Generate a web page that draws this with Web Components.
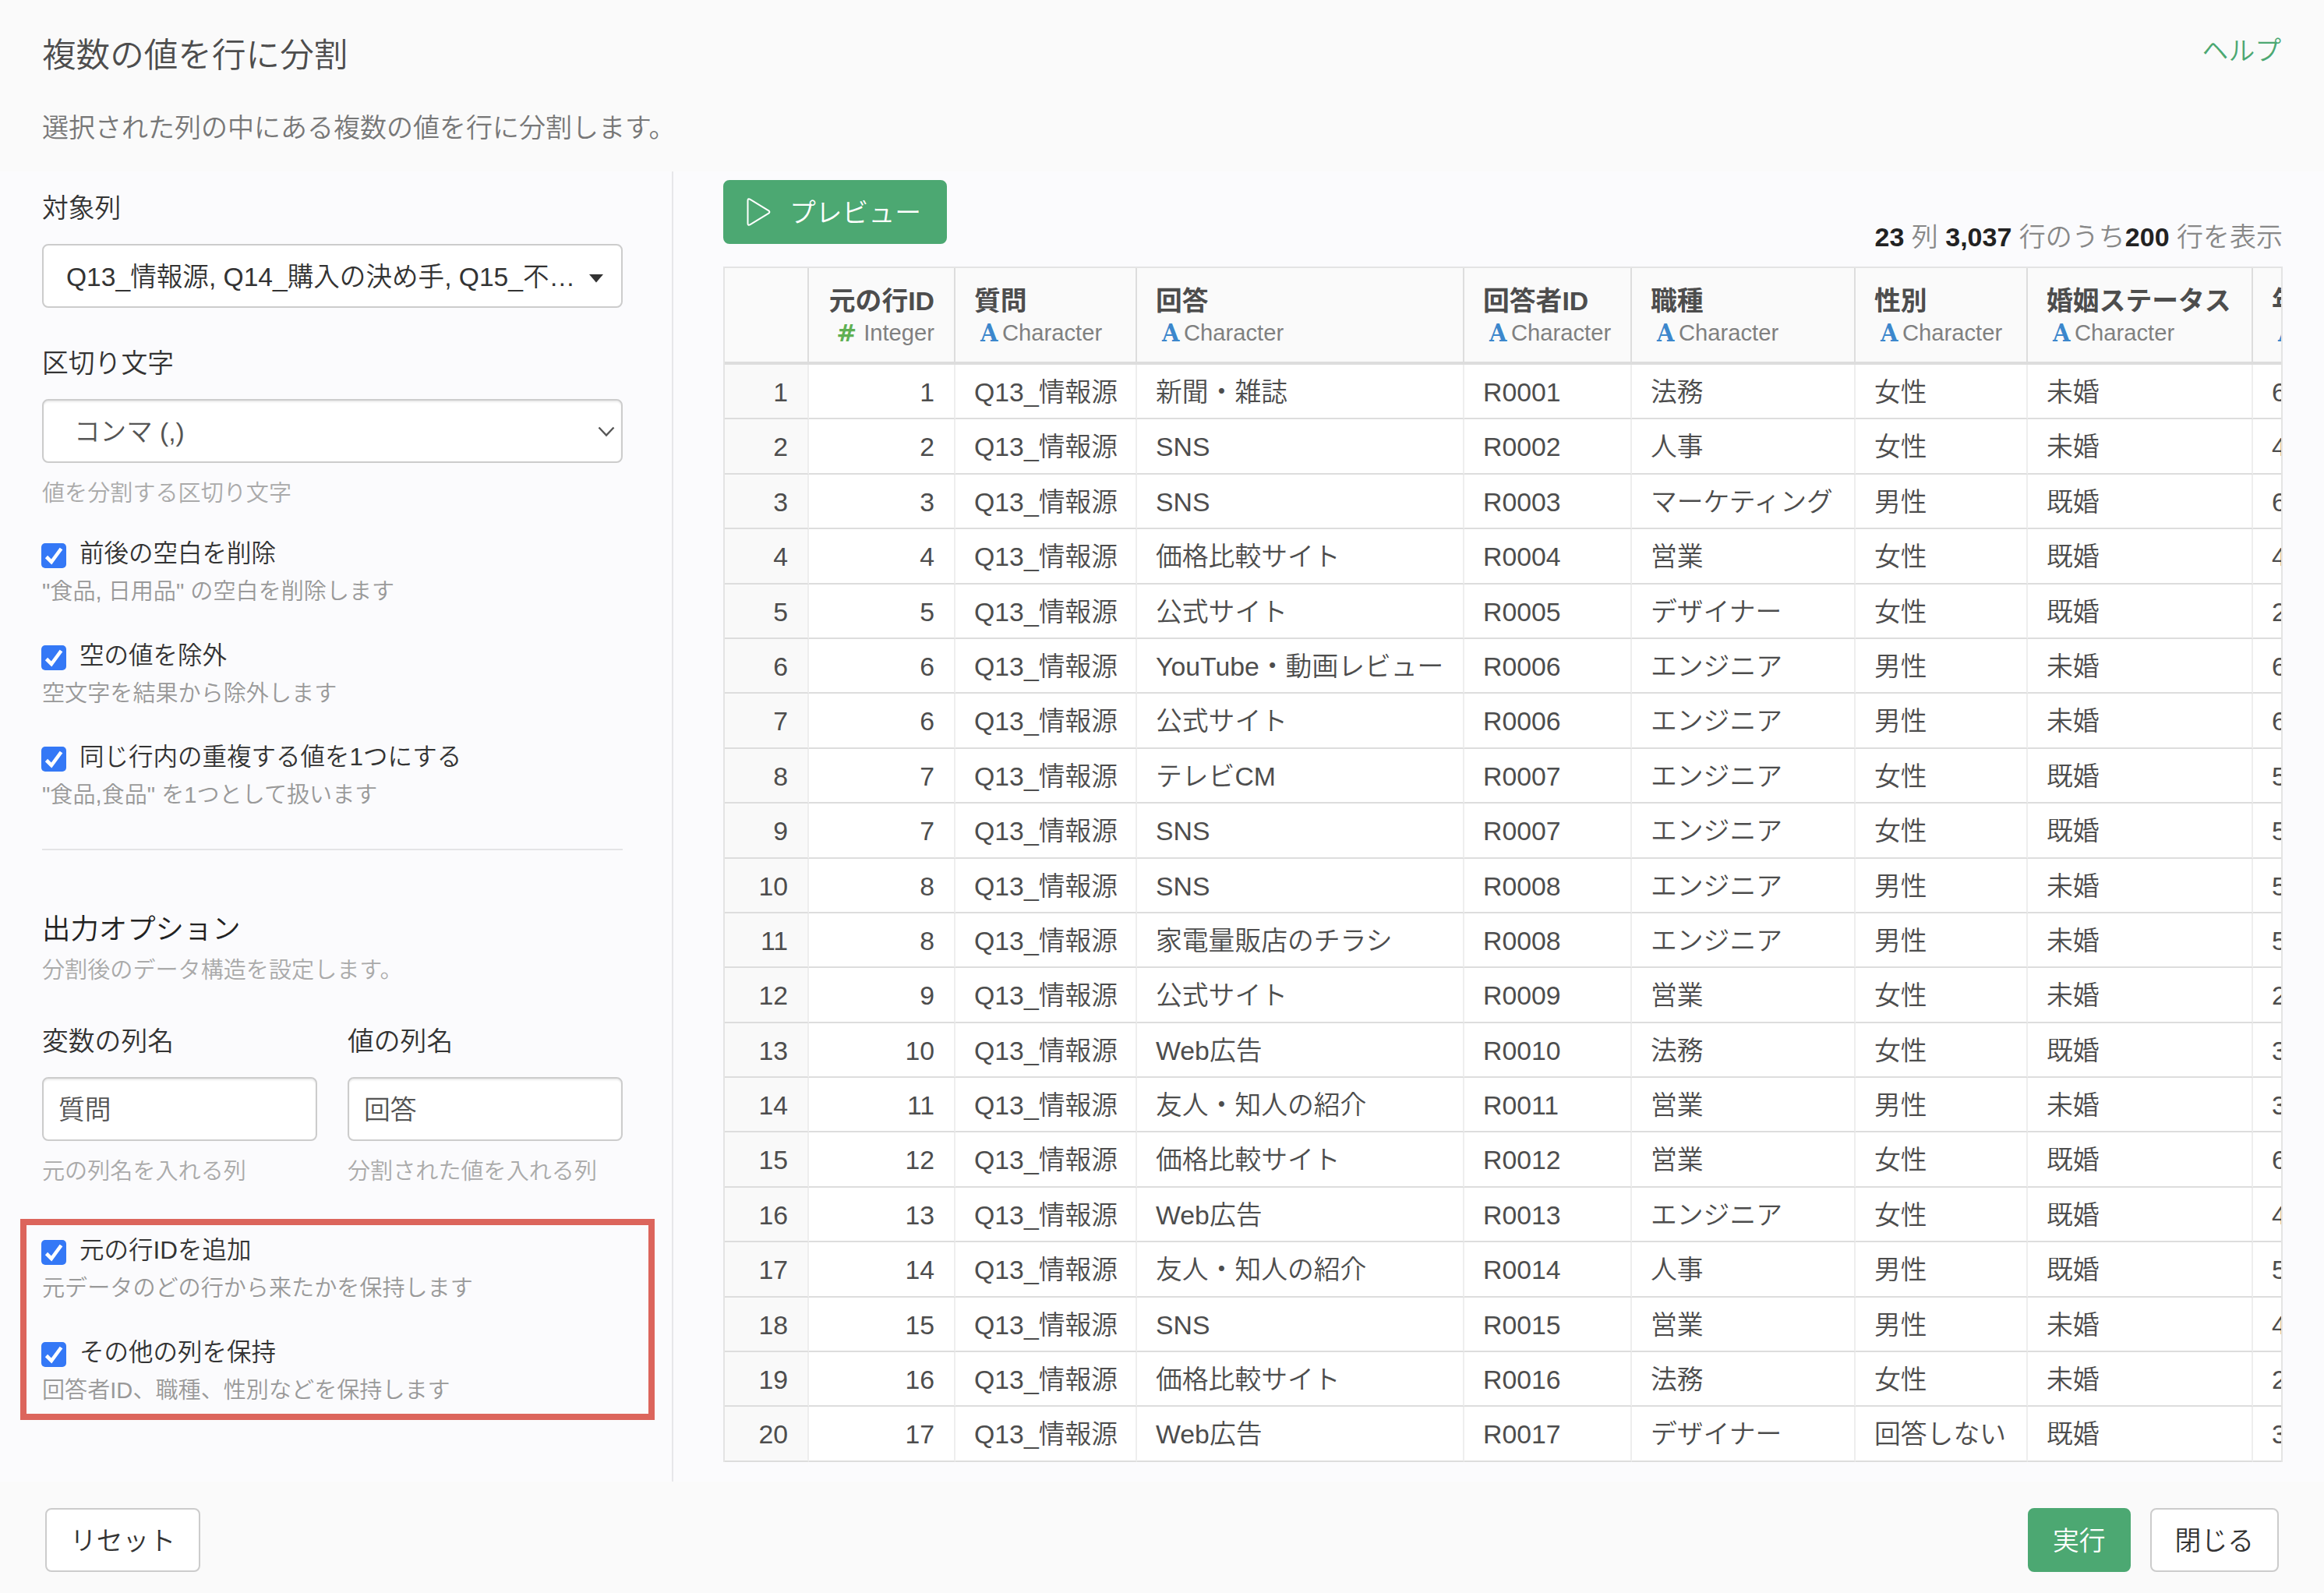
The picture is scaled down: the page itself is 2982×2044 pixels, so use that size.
<!DOCTYPE html>
<html lang="ja">
<head>
<meta charset="utf-8">
<title>複数の値を行に分割</title>
<style>
html, body
{
    margin: 0;
    height: 100%;
}
body
{
    font-family: "Liberation Sans", "Noto Sans CJK JP", sans-serif;
    font-weight: 350;
    font-size: 33.8px;
    color: #333;
    overflow: hidden;
}
</style>
</head>
<body>
<split-dialog>
    <span slot="title">複数の値を行に分割</span>
    <span slot="description">選択された列の中にある複数の値を行に分割します。</span>
    <span slot="help">ヘルプ</span>

    <option-panel slot="options">
        <form-field label="対象列">
            <select-box kind="picker">Q13_情報源, Q14_購入の決め手, Q15_不…</select-box>
        </form-field>
        <form-field label="区切り文字" hint="値を分割する区切り文字" style="margin-top:46px">
            <select-box kind="native">コンマ (,)</select-box>
        </form-field>
        <check-group style="margin-top:35px">
            <check-item label="前後の空白を削除">"食品, 日用品" の空白を削除します</check-item>
            <check-item label="空の値を除外">空文字を結果から除外します</check-item>
            <check-item label="同じ行内の重複する値を1つにする">"食品,食品" を1つとして扱います</check-item>
        </check-group>
        <section-title label="出力オプション">分割後のデータ構造を設定します。</section-title>
        <field-pair>
            <form-field label="変数の列名" hint="元の列名を入れる列"><text-box>質問</text-box></form-field>
            <form-field label="値の列名" hint="分割された値を入れる列"><text-box>回答</text-box></form-field>
        </field-pair>
        <check-group marked>
            <check-item label="元の行IDを追加">元データのどの行から来たかを保持します</check-item>
            <check-item label="その他の列を保持">回答者ID、職種、性別などを保持します</check-item>
        </check-group>
    </option-panel>

    <preview-toolbar slot="preview">
        <push-button slot="action" kind="primary" icon="play">プレビュー</push-button>
        <b>23</b> 列 <b>3,037</b> 行のうち<b>200</b> 行を表示
    </preview-toolbar>
    <data-table slot="preview"></data-table>

    <push-button slot="footer-left">リセット</push-button>
    <push-button slot="footer-right" kind="primary">実行</push-button>
    <push-button slot="footer-right">閉じる</push-button>
</split-dialog>

<script>
class SplitDialog extends HTMLElement
{
    connectedCallback()
    {
        let root = this.attachShadow({mode: "open"});
        root.innerHTML =
        `<style>
        :host
        {
            display: grid;
            grid-template-rows: 220px 1681px 1fr;
            height: 2044px;
            background: #fafafa;
        }
        header
        {
            display: flex;
            justify-content: space-between;
            padding: 39px 55px 0 54px;
        }
        h1
        {
            margin: 0;
            font-size: 43.6px;
            font-weight: inherit;
            line-height: 64px;
            color: #4d4d4d;
        }
        p
        {
            margin: 37px 0 0;
            font-size: 34px;
            line-height: 48px;
            color: #777;
        }
        a
        {
            line-height: 52px;
            color: #4ca872;
        }
        main
        {
            display: grid;
            grid-template-columns: 864px minmax(0, 1fr);
            background: #fbfbfd;
        }
        aside
        {
            border-right: 2px solid #e7e7ea;
            padding: 22px 63px 0 54px;
            box-sizing: border-box;
        }
        article
        {
            padding: 11px 53px 0 64px;
        }
        footer
        {
            display: flex;
            align-items: flex-start;
            justify-content: space-between;
            padding: 34px 58px 0 58px;
        }
        footer div
        {
            display: flex;
            gap: 25px;
        }
        </style>
        <header>
            <div>
                <h1><slot name="title"></slot></h1>
                <p><slot name="description"></slot></p>
            </div>
            <a><slot name="help"></slot></a>
        </header>
        <main>
            <aside><slot name="options"></slot></aside>
            <article><slot name="preview"></slot></article>
        </main>
        <footer>
            <div><slot name="footer-left"></slot></div>
            <div><slot name="footer-right"></slot></div>
        </footer>`;
    }
}

customElements.define("split-dialog", SplitDialog);


class OptionPanel extends HTMLElement
{
    connectedCallback()
    {
        let root = this.attachShadow({mode: "open"});
        root.innerHTML =
        `<style>
        :host
        {
            display: flex;
            flex-direction: column;
        }
        </style>
        <slot></slot>`;
    }
}

customElements.define("option-panel", OptionPanel);


class FormField extends HTMLElement
{
    connectedCallback()
    {
        let hint = this.getAttribute("hint");
        let root = this.attachShadow({mode: "open"});
        root.innerHTML =
        `<style>
        :host
        {
            display: block;
        }
        label
        {
            display: block;
            line-height: 48px;
            padding-top: 1px;
            margin-bottom: 22px;
        }
        small
        {
            display: block;
            margin-top: 19px;
            font-size: 29.1px;
            line-height: 40px;
            color: #aaa;
        }
        </style>
        <label>${this.getAttribute("label")}</label>
        <slot></slot>
        ${hint ? `<small>${hint}</small>` : ""}`;
    }
}

customElements.define("form-field", FormField);


class SelectBox extends HTMLElement
{
    connectedCallback()
    {
        let picker = this.getAttribute("kind") == "picker";
        let arrow = picker
            ? `<svg width="18" height="11" viewBox="0 0 18 11"><path d="M0 0H18L9 10.5Z" fill="#333"/></svg>`
            : `<svg width="22" height="14" viewBox="0 0 22 14"><path d="M1.5 1.5L11 11.5L20.5 1.5" fill="none" stroke="#555" stroke-width="2.4"/></svg>`;
        let root = this.attachShadow({mode: "open"});
        root.innerHTML =
        `<style>
        :host
        {
            display: flex;
            align-items: center;
            justify-content: space-between;
            box-sizing: border-box;
            height: 82px;
            border: 2px solid #ccc;
            border-radius: 8px;
            background: #fff;
            padding: ${picker ? "0 23px 0 29px" : "0 8px 0 39px"};
            color: ${picker ? "#333" : "#555"};
            white-space: nowrap;
            ${picker ? "" : "box-shadow: inset 0 2px 2px rgba(0,0,0,0.075);"}
        }
        span
        {
            font-size: 33.6px;
            margin-top: -4px;
        }
        svg
        {
            margin-top: ${picker ? "6px" : "1px"};
            flex: none;
        }
        </style>
        <span><slot></slot></span>${arrow}`;
    }
}

customElements.define("select-box", SelectBox);


class TextBox extends HTMLElement
{
    connectedCallback()
    {
        let root = this.attachShadow({mode: "open"});
        root.innerHTML =
        `<style>
        :host
        {
            display: flex;
            align-items: center;
            box-sizing: border-box;
            height: 82px;
            border: 2px solid #ccc;
            border-radius: 8px;
            background: #fff;
            box-shadow: inset 0 2px 2px rgba(0,0,0,0.075);
            padding: 0 19px;
            color: #555;
        }
        span
        {
            margin-top: -3px;
        }
        </style>
        <span><slot></slot></span>`;
    }
}

customElements.define("text-box", TextBox);


class CheckGroup extends HTMLElement
{
    connectedCallback()
    {
        let root = this.attachShadow({mode: "open"});
        root.innerHTML =
        `<style>
        :host
        {
            display: flex;
            flex-direction: column;
            gap: 40.7px;
        }
        :host([marked])
        {
            box-sizing: border-box;
            width: 814px;
            height: 258px;
            margin: 41px 0 0 -28px;
            border: 8px solid #dc655c;
            padding: 10px 0 0 20px;
        }
        </style>
        <slot></slot>`;
    }
}

customElements.define("check-group", CheckGroup);


class CheckItem extends HTMLElement
{
    connectedCallback()
    {
        let root = this.attachShadow({mode: "open"});
        root.innerHTML =
        `<style>
        :host
        {
            display: block;
            height: 90px;
        }
        label
        {
            display: flex;
            gap: 17px;
            height: 51px;
            margin-left: -1px;
            font-size: 31.5px;
            line-height: 44px;
        }
        svg
        {
            margin-top: 9px;
        }
        small
        {
            display: block;
            font-size: 29.1px;
            line-height: 40px;
            color: #999;
        }
        </style>
        <label>
            <svg width="32" height="32" viewBox="0 0 32 32">
                <rect width="32" height="32" rx="5" fill="#3478f6"/>
                <path d="M6.5 17.5L13 24L25.5 7" fill="none" stroke="#fff" stroke-width="4.6"/>
            </svg>
            <span>${this.getAttribute("label")}</span>
        </label>
        <small><slot></slot></small>`;
    }
}

customElements.define("check-item", CheckItem);


class SectionTitle extends HTMLElement
{
    connectedCallback()
    {
        let root = this.attachShadow({mode: "open"});
        root.innerHTML =
        `<style>
        :host
        {
            display: block;
            margin-top: 50px;
            border-top: 2px solid #e4e4e6;
            padding-top: 78px;
        }
        h2
        {
            margin: 0 0 8px;
            font-size: 36.4px;
            font-weight: inherit;
            line-height: 48px;
            color: #222;
        }
        small
        {
            display: block;
            font-size: 29.1px;
            line-height: 40px;
            color: #aaa;
        }
        </style>
        <h2>${this.getAttribute("label")}</h2>
        <small><slot></slot></small>`;
    }
}

customElements.define("section-title", SectionTitle);


class FieldPair extends HTMLElement
{
    connectedCallback()
    {
        let root = this.attachShadow({mode: "open"});
        root.innerHTML =
        `<style>
        :host
        {
            display: grid;
            grid-template-columns: 1fr 1fr;
            gap: 39px;
            margin-top: 46px;
        }
        </style>
        <slot></slot>`;
    }
}

customElements.define("field-pair", FieldPair);


class PushButton extends HTMLElement
{
    connectedCallback()
    {
        let play = this.getAttribute("icon") == "play";
        let root = this.attachShadow({mode: "open"});
        root.innerHTML =
        `<style>
        :host
        {
            display: flex;
            align-items: center;
            box-sizing: border-box;
            height: 82px;
            border: 2px solid #ccc;
            border-radius: 8px;
            background: #fff;
            padding: 0 30px;
            white-space: nowrap;
        }
        :host([kind=primary])
        {
            border-color: #4ca872;
            background: #4ca872;
            color: #fff;
        }
        :host([icon])
        {
            padding: 0 31px 0 28px;
        }
        span
        {
            margin-top: -4px;
        }
        svg
        {
            margin-right: 24px;
        }
        </style>
        ${play ? `<svg width="31" height="36" viewBox="0 0 31 36"><path d="M1.5 3.5Q1.5 0 4.6 1.8L28.4 16.4Q30.4 18 28.4 19.6L4.6 34.2Q1.5 36 1.5 32.5Z" fill="none" stroke="#fff" stroke-width="2" stroke-linejoin="round"/></svg>` : ""}
        <span><slot></slot></span>`;
    }
}

customElements.define("push-button", PushButton);


class PreviewToolbar extends HTMLElement
{
    connectedCallback()
    {
        let root = this.attachShadow({mode: "open"});
        root.innerHTML =
        `<style>
        :host
        {
            display: flex;
            justify-content: space-between;
            height: 111px;
        }
        span
        {
            margin-top: 49px;
            font-size: 34px;
            line-height: 48px;
            color: #888;
            white-space: nowrap;
        }
        ::slotted(b)
        {
            color: #222;
        }
        </style>
        <slot name="action"></slot>
        <span><slot></slot></span>`;
    }
}

customElements.define("preview-toolbar", PreviewToolbar);


class DataTable extends HTMLElement
{
    columns = [
        ["元の行ID", "Integer"],
        ["質問", "Character"],
        ["回答", "Character"],
        ["回答者ID", "Character"],
        ["職種", "Character"],
        ["性別", "Character"],
        ["婚姻ステータス", "Character"],
        ["年", ""]
    ];

    // row id, answer, respondent, job, sex, marital status, age
    rows = [
        [1, "新聞・雑誌", "R0001", "法務", "女性", "未婚", "6"],
        [2, "SNS", "R0002", "人事", "女性", "未婚", "4"],
        [3, "SNS", "R0003", "マーケティング", "男性", "既婚", "6"],
        [4, "価格比較サイト", "R0004", "営業", "女性", "既婚", "4"],
        [5, "公式サイト", "R0005", "デザイナー", "女性", "既婚", "2"],
        [6, "YouTube・動画レビュー", "R0006", "エンジニア", "男性", "未婚", "6"],
        [6, "公式サイト", "R0006", "エンジニア", "男性", "未婚", "6"],
        [7, "テレビCM", "R0007", "エンジニア", "女性", "既婚", "5"],
        [7, "SNS", "R0007", "エンジニア", "女性", "既婚", "5"],
        [8, "SNS", "R0008", "エンジニア", "男性", "未婚", "5"],
        [8, "家電量販店のチラシ", "R0008", "エンジニア", "男性", "未婚", "5"],
        [9, "公式サイト", "R0009", "営業", "女性", "未婚", "2"],
        [10, "Web広告", "R0010", "法務", "女性", "既婚", "3"],
        [11, "友人・知人の紹介", "R0011", "営業", "男性", "未婚", "3"],
        [12, "価格比較サイト", "R0012", "営業", "女性", "既婚", "6"],
        [13, "Web広告", "R0013", "エンジニア", "女性", "既婚", "4"],
        [14, "友人・知人の紹介", "R0014", "人事", "男性", "既婚", "5"],
        [15, "SNS", "R0015", "営業", "男性", "未婚", "4"],
        [16, "価格比較サイト", "R0016", "法務", "女性", "未婚", "2"],
        [17, "Web広告", "R0017", "デザイナー", "回答しない", "既婚", "3"]
    ];

    connectedCallback()
    {
        let head = this.columns.map(([name, type]) =>
        {
            let number = type == "Integer";
            return `<div class="th ${number ? "num" : ""}">
                <b>${name}</b>
                <small><i class="${number ? "hash" : "alpha"}">${number ? "#" : "A"}</i>${type}</small>
            </div>`;
        }).join("");

        let body = this.rows.map((row, i) =>
        {
            let [id, ...rest] = row;
            return `<div class="td num index">${i + 1}</div><div class="td num">${id}</div><div class="td">Q13_情報源</div>`
                + rest.map(text => `<div class="td">${text}</div>`).join("");
        }).join("");

        let root = this.attachShadow({mode: "open"});
        root.innerHTML =
        `<style>
        :host
        {
            display: grid;
            grid-template-columns: 108px 188px 233px 420px 215px 287px 221px 289px 110px;
            grid-template-rows: 124px repeat(20, 70.4px);
            box-sizing: border-box;
            width: 2001px;
            height: 1534px;
            overflow: hidden;
            border: 2px solid #e4e4e4;
            border-bottom: 0;
            background: #fff;
            color: #4d4d4d;
            white-space: nowrap;
        }
        .th
        {
            box-sizing: border-box;
            border-right: 2px solid #ddd;
            border-bottom: 4px solid #ddd;
            background: #fafafa;
            padding: 18px 24px 0;
        }
        .th b
        {
            display: block;
            line-height: 48px;
        }
        small
        {
            display: flex;
            padding-left: 8px;
            font-size: 29.2px;
            line-height: 35px;
            color: #808080;
        }
        i
        {
            font-style: normal;
            font-weight: bold;
        }
        .alpha
        {
            width: 28px;
            font-family: "DejaVu Serif Condensed", "DejaVu Serif", serif;
            font-size: 32px;
            color: #3c87cc;
        }
        .hash
        {
            margin-right: 9px;
            font-family: "DejaVu Sans", sans-serif;
            font-size: 31px;
            color: #5fb053;
        }
        .td
        {
            box-sizing: border-box;
            border-right: 2px solid #eee;
            border-bottom: 2px solid #ddd;
            padding-left: 24px;
            line-height: 70px;
        }
        .num
        {
            text-align: right;
            padding-right: 25px;
        }
        .num small
        {
            justify-content: flex-end;
        }
        .index
        {
            background: #f9f9f9;
        }
        </style>
        <div class="th"></div>${head}${body}`;
    }
}

customElements.define("data-table", DataTable);
</script>
</body>
</html>
